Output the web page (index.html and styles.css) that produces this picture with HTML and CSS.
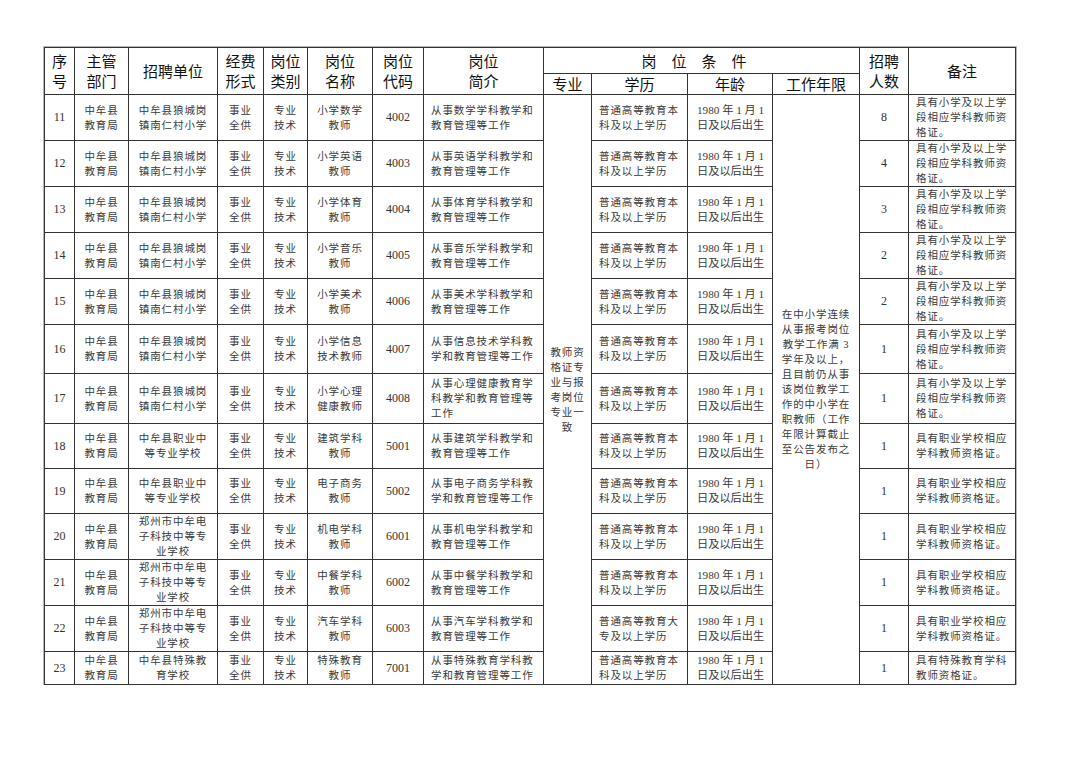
FILE: index.html
```html
<!DOCTYPE html>
<html lang="zh-CN">
<head>
<meta charset="utf-8">
<title>招聘岗位表</title>
<link rel="stylesheet" href="styles.css">
</head>
<body>
<div class="page">
<table class="grid">
<colgroup>
<col class="c1"><col class="c2"><col class="c3"><col class="c4"><col class="c5"><col class="c6"><col class="c7"><col class="c8"><col class="c9"><col class="c10"><col class="c11"><col class="c12"><col class="c13"><col class="c14">
</colgroup>
<thead>
<tr class="h1">
<th rowspan="2">序<br>号</th>
<th rowspan="2">主管<br>部门</th>
<th rowspan="2">招聘单位</th>
<th rowspan="2">经费<br>形式</th>
<th rowspan="2">岗位<br>类别</th>
<th rowspan="2">岗位<br>名称</th>
<th rowspan="2">岗位<br>代码</th>
<th rowspan="2">岗位<br>简介</th>
<th colspan="4" class="cond">岗位条件</th>
<th rowspan="2">招聘<br>人数</th>
<th rowspan="2">备注</th>
</tr>
<tr class="h2">
<th>专业</th>
<th>学历</th>
<th>年龄</th>
<th>工作年限</th>
</tr>
</thead>
<tbody>
<tr class="r46">
<td class="num">11</td><td>中牟县<br>教育局</td><td>中牟县狼城岗<br>镇南仁村小学</td><td>事业<br>全供</td><td>专业<br>技术</td><td>小学数学<br>教师</td><td class="num">4002</td><td class="left">从事数学学科教学和<br>教育管理等工作</td>
<td rowspan="13" class="major">教师资<br>格证专<br>业与报<br>考岗位<br>专业一<br>致</td>
<td class="left">普通高等教育本<br>科及以上学历</td><td class="left age">1980 年 1 月 1<br>日及以后出生</td>
<td rowspan="13" class="years">在中小学连续<br>从事报考岗位<br>教学工作满 3<br>学年及以上，<br>且目前仍从事<br>该岗位教学工<br>作的中小学在<br>职教师（工作<br>年限计算截止<br>至公告发布之<br>日）</td>
<td class="num">8</td><td class="left note">具有小学及以上学<br>段相应学科教师资<br>格证。</td>
</tr>
<tr class="r46">
<td class="num">12</td><td>中牟县<br>教育局</td><td>中牟县狼城岗<br>镇南仁村小学</td><td>事业<br>全供</td><td>专业<br>技术</td><td>小学英语<br>教师</td><td class="num">4003</td><td class="left">从事英语学科教学和<br>教育管理等工作</td>
<td class="left">普通高等教育本<br>科及以上学历</td><td class="left age">1980 年 1 月 1<br>日及以后出生</td>
<td class="num">4</td><td class="left note">具有小学及以上学<br>段相应学科教师资<br>格证。</td>
</tr>
<tr class="r46">
<td class="num">13</td><td>中牟县<br>教育局</td><td>中牟县狼城岗<br>镇南仁村小学</td><td>事业<br>全供</td><td>专业<br>技术</td><td>小学体育<br>教师</td><td class="num">4004</td><td class="left">从事体育学科教学和<br>教育管理等工作</td>
<td class="left">普通高等教育本<br>科及以上学历</td><td class="left age">1980 年 1 月 1<br>日及以后出生</td>
<td class="num">3</td><td class="left note">具有小学及以上学<br>段相应学科教师资<br>格证。</td>
</tr>
<tr class="r46">
<td class="num">14</td><td>中牟县<br>教育局</td><td>中牟县狼城岗<br>镇南仁村小学</td><td>事业<br>全供</td><td>专业<br>技术</td><td>小学音乐<br>教师</td><td class="num">4005</td><td class="left">从事音乐学科教学和<br>教育管理等工作</td>
<td class="left">普通高等教育本<br>科及以上学历</td><td class="left age">1980 年 1 月 1<br>日及以后出生</td>
<td class="num">2</td><td class="left note">具有小学及以上学<br>段相应学科教师资<br>格证。</td>
</tr>
<tr class="r46">
<td class="num">15</td><td>中牟县<br>教育局</td><td>中牟县狼城岗<br>镇南仁村小学</td><td>事业<br>全供</td><td>专业<br>技术</td><td>小学美术<br>教师</td><td class="num">4006</td><td class="left">从事美术学科教学和<br>教育管理等工作</td>
<td class="left">普通高等教育本<br>科及以上学历</td><td class="left age">1980 年 1 月 1<br>日及以后出生</td>
<td class="num">2</td><td class="left note">具有小学及以上学<br>段相应学科教师资<br>格证。</td>
</tr>
<tr class="r49">
<td class="num">16</td><td>中牟县<br>教育局</td><td>中牟县狼城岗<br>镇南仁村小学</td><td>事业<br>全供</td><td>专业<br>技术</td><td>小学信息<br>技术教师</td><td class="num">4007</td><td class="left">从事信息技术学科教<br>学和教育管理等工作</td>
<td class="left">普通高等教育本<br>科及以上学历</td><td class="left age">1980 年 1 月 1<br>日及以后出生</td>
<td class="num">1</td><td class="left note">具有小学及以上学<br>段相应学科教师资<br>格证。</td>
</tr>
<tr class="r50">
<td class="num">17</td><td>中牟县<br>教育局</td><td>中牟县狼城岗<br>镇南仁村小学</td><td>事业<br>全供</td><td>专业<br>技术</td><td>小学心理<br>健康教师</td><td class="num">4008</td><td class="left">从事心理健康教育学<br>科教学和教育管理等<br>工作</td>
<td class="left">普通高等教育本<br>科及以上学历</td><td class="left age">1980 年 1 月 1<br>日及以后出生</td>
<td class="num">1</td><td class="left note">具有小学及以上学<br>段相应学科教师资<br>格证。</td>
</tr>
<tr class="r45">
<td class="num">18</td><td>中牟县<br>教育局</td><td>中牟县职业中<br>等专业学校</td><td>事业<br>全供</td><td>专业<br>技术</td><td>建筑学科<br>教师</td><td class="num">5001</td><td class="left">从事建筑学科教学和<br>教育管理等工作</td>
<td class="left">普通高等教育本<br>科及以上学历</td><td class="left age">1980 年 1 月 1<br>日及以后出生</td>
<td class="num">1</td><td class="left note">具有职业学校相应<br>学科教师资格证。</td>
</tr>
<tr class="r45">
<td class="num">19</td><td>中牟县<br>教育局</td><td>中牟县职业中<br>等专业学校</td><td>事业<br>全供</td><td>专业<br>技术</td><td>电子商务<br>教师</td><td class="num">5002</td><td class="left">从事电子商务学科教<br>学和教育管理等工作</td>
<td class="left">普通高等教育本<br>科及以上学历</td><td class="left age">1980 年 1 月 1<br>日及以后出生</td>
<td class="num">1</td><td class="left note">具有职业学校相应<br>学科教师资格证。</td>
</tr>
<tr class="r46">
<td class="num">20</td><td>中牟县<br>教育局</td><td>郑州市中牟电<br>子科技中等专<br>业学校</td><td>事业<br>全供</td><td>专业<br>技术</td><td>机电学科<br>教师</td><td class="num">6001</td><td class="left">从事机电学科教学和<br>教育管理等工作</td>
<td class="left">普通高等教育本<br>科及以上学历</td><td class="left age">1980 年 1 月 1<br>日及以后出生</td>
<td class="num">1</td><td class="left note">具有职业学校相应<br>学科教师资格证。</td>
</tr>
<tr class="r45">
<td class="num">21</td><td>中牟县<br>教育局</td><td>郑州市中牟电<br>子科技中等专<br>业学校</td><td>事业<br>全供</td><td>专业<br>技术</td><td>中餐学科<br>教师</td><td class="num">6002</td><td class="left">从事中餐学科教学和<br>教育管理等工作</td>
<td class="left">普通高等教育本<br>科及以上学历</td><td class="left age">1980 年 1 月 1<br>日及以后出生</td>
<td class="num">1</td><td class="left note">具有职业学校相应<br>学科教师资格证。</td>
</tr>
<tr class="r46">
<td class="num">22</td><td>中牟县<br>教育局</td><td>郑州市中牟电<br>子科技中等专<br>业学校</td><td>事业<br>全供</td><td>专业<br>技术</td><td>汽车学科<br>教师</td><td class="num">6003</td><td class="left">从事汽车学科教学和<br>教育管理等工作</td>
<td class="left">普通高等教育大<br>专及以上学历</td><td class="left age">1980 年 1 月 1<br>日及以后出生</td>
<td class="num">1</td><td class="left note">具有职业学校相应<br>学科教师资格证。</td>
</tr>
<tr class="r33">
<td class="num">23</td><td>中牟县<br>教育局</td><td>中牟县特殊教<br>育学校</td><td>事业<br>全供</td><td>专业<br>技术</td><td>特殊教育<br>教师</td><td class="num">7001</td><td class="left">从事特殊教育学科教<br>学和教育管理等工作</td>
<td class="left">普通高等教育本<br>科及以上学历</td><td class="left age">1980 年 1 月 1<br>日及以后出生</td>
<td class="num">1</td><td class="left note">具有特殊教育学科<br>教师资格证。</td>
</tr>
</tbody>
</table>
</div>
</body>
</html>
```

FILE: styles.css
```css
html, body {
  margin: 0;
  padding: 0;
  background: #ffffff;
}

.page {
  padding: 47px 0 0 44px;
}

.grid {
  border-collapse: collapse;
  table-layout: fixed;
  width: 972px;
  border: 1px solid #222;
  box-shadow: 0 0 0 1px #b8b8b8;
  font-family: "Liberation Serif", "Noto Sans CJK SC", serif;
  color: #3a3a3a;
}

.c1 { width: 30px; }
.c2 { width: 54px; }
.c3 { width: 89px; }
.c4 { width: 46px; }
.c5 { width: 44px; }
.c6 { width: 65px; }
.c7 { width: 51px; }
.c8 { width: 120px; }
.c9 { width: 48px; }
.c10 { width: 96px; }
.c11 { width: 85px; }
.c12 { width: 87px; }
.c13 { width: 49px; }
.c14 { width: 107px; }

.grid th,
.grid td {
  border: 1px solid #333;
  padding: 0;
  text-align: center;
  vertical-align: middle;
  white-space: nowrap;
  overflow: hidden;
}

.grid th {
  font-family: "Noto Sans CJK SC", sans-serif;
  font-weight: 400;
  font-size: 15px;
  line-height: 20px;
  color: #111;
}

.h1 { height: 26px; }
.h2 { height: 20px; }

.cond {
  letter-spacing: 15px;
  padding-left: 15px;
}

.grid td {
  font-size: 10.5px;
  line-height: 15px;
  letter-spacing: 0.9px;
}

.grid td.num {
  font-size: 12px;
  letter-spacing: 0;
  color: #333;
}

.grid td.left {
  text-align: left;
  padding-left: 7px;
}

.grid td.age {
  padding-left: 9px;
  font-size: 11.2px;
  letter-spacing: 0;
}

.grid td.major,
.grid td.years {
  line-height: 15px;
}

.r46 { height: 46px; }
.r45 { height: 45px; }
.r49 { height: 49px; }
.r50 { height: 50px; }
.r33 { height: 33px; }
```
